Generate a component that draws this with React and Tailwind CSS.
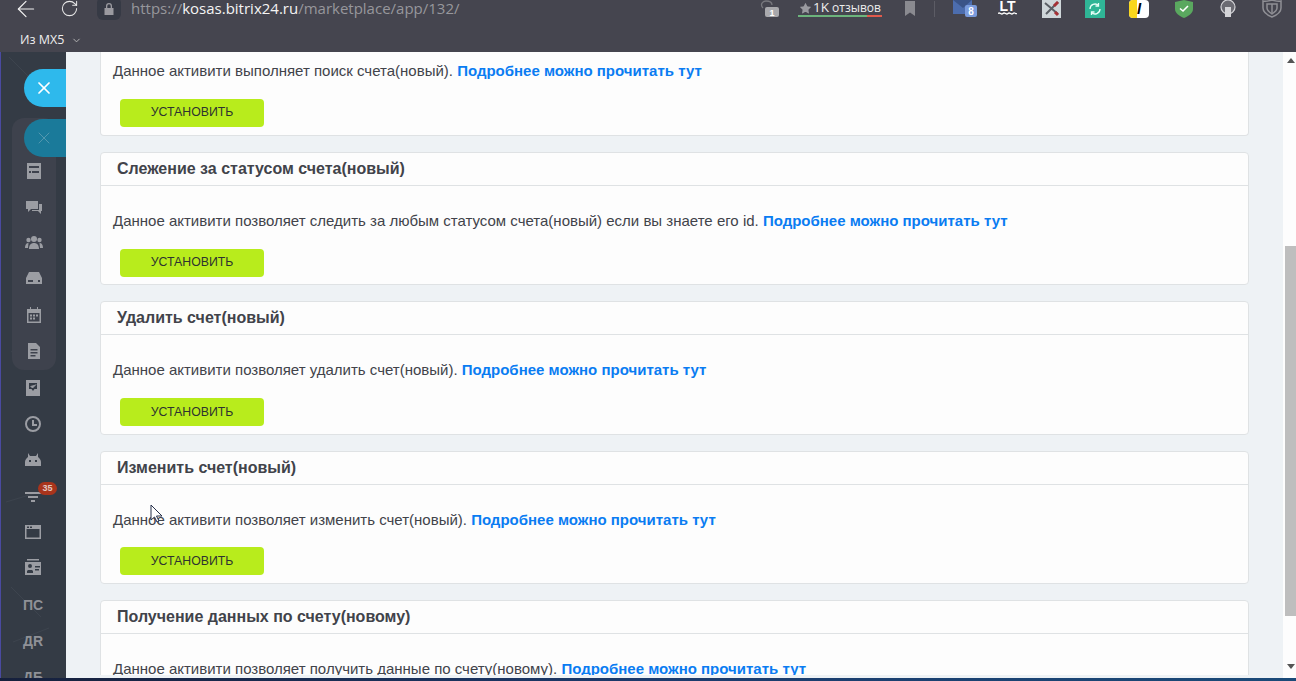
import React from "react";
import { ArrowLeft, RotateCw, ChevronDown, Star, X } from "lucide-react";

const Sans = "font-['Liberation_Sans',Arial,sans-serif]";

function Card({ title, text, noHeader }) {
  return (
    <section className={noHeader ? "shrink-0 h-[84px] bg-[#fdfdfd] border-x border-b border-[#dfe2e4] rounded-b" : "shrink-0 h-[133.33px] bg-[#fdfdfd] border border-[#dfe2e4] rounded"}>
      {title && (
        <h3 className="h-[33px] pl-4 flex items-center border-b border-[#dfe2e4] text-[16px] leading-none font-bold text-[#41434a]">{title}</h3>
      )}
      <div className={noHeader ? "pl-3 pt-[10px]" : "pl-3 pt-[26px]"}>
        <p className="text-[15px] leading-[18px] text-[#41434a] whitespace-nowrap">
          {text} <a className="font-bold text-[#0a7cf2]">Подробнее можно прочитать тут</a>
        </p>
        <button className="block ml-[7px] mt-[18.67px] w-[144px] h-[28px] rounded-sm bg-[#b8ec1c] text-[12.3px] text-[#2e3330]">УСТАНОВИТЬ</button>
      </div>
    </section>
  );
}

const S = "#9b9da3";
function Ic({ children }) {
  return <div className="h-9 flex items-center justify-center"><svg width="18" height="18" viewBox="0 0 18 18" fill={S}>{children}</svg></div>;
}

export default function App() {
  return (
    <div className={`${Sans} w-[1296px] h-[681px] overflow-hidden flex flex-col bg-[#2a3040]`}>
      <header className="h-[52px] shrink-0 bg-[#45454f] text-white">
        <div className="h-[17px] flex items-center">
          <ArrowLeft size={26} strokeWidth={1.1} className="shrink-0 ml-[13px] text-[#f2f2f2]" />
          <RotateCw size={19} strokeWidth={1.3} className="shrink-0 ml-[21px] text-[#e8e8e8]" />
          <div className="shrink-0 ml-[18px] w-[24px] h-[23px] rounded-md bg-[#363a45] flex items-center justify-center">
            <svg width="12" height="14" viewBox="0 0 12 14" fill="#9a9aa0"><path d="M3 6V4a3 3 0 0 1 6 0v2h1.500v7H1.500V6zM4.300 6h3.400V4a1.700 1.700 0 0 0-3.400 0z" /></svg>
          </div>
          <div className="shrink-0 ml-[10px] leading-[17px] font-['Open_Sans',sans-serif] text-[15px] text-[#97979c]">
            https://<span className="text-[#f4f4f4]">kosas.bitrix24.ru</span>/marketplace/app/132/
          </div>
          <div className="ml-auto flex items-center h-full">
            <svg width="19" height="18" viewBox="0 0 19 18" fill="none" className="shrink-0">
              <path d="M3 8C0 5 2 1 6 1s6 2 6 4" stroke="#77777d" strokeWidth="1.300" />
              <rect x="5" y="7" width="14" height="10" rx="2" fill="#a9a9ad" />
              <text x="12" y="15.500" textAnchor="middle" fontSize="9" fontWeight="bold" fill="#fff">1</text>
            </svg>
            <div className="shrink-0 ml-[19px] w-[84px] h-[17px] relative flex items-center justify-center font-['Open_Sans',sans-serif] text-[#eee] -mt-px">
              <Star size={13} fill="#9a9aa0" stroke="none" className="mr-[1px]" />
              <span className="text-[13.5px] leading-none">1K</span>
              <span className="text-[12px] leading-none ml-[3px]">отзывов</span>
              <div className="absolute left-0 right-0 bottom-0 h-[2px] flex">
                <div className="w-[69px] bg-[#6cb47c]" /><div className="flex-1 bg-[#e25a4c]" />
              </div>
            </div>
            <svg className="shrink-0 ml-[23px]" width="10" height="15" viewBox="0 0 10 15" fill="#8a8a90"><path d="M0 0h10v15L5 11.500 0 15z" /></svg>
            <div className="shrink-0 ml-[19px] w-px h-[16px] bg-[#5c5c65]" />
            <svg className="shrink-0 ml-[18px]" width="24" height="17" viewBox="0 0 24 17">
              <rect y="0" width="19" height="14" fill="#4c6dae" />
              <path d="M0 0h19L10 8z" fill="#3a5488" />
              <rect x="12" y="5" width="12" height="12" rx="2" fill="#7a9bdc" />
              <text x="18" y="15" textAnchor="middle" fontSize="10" fontWeight="bold" fill="#fff">8</text>
            </svg>
            <div className="shrink-0 ml-[21px] w-[19px] h-[17px] flex flex-col items-center">
              <span className="text-[14px] leading-[12px] font-bold text-white">LT</span>
              <svg width="19" height="4" viewBox="0 0 19 4" fill="none" stroke="#fff" strokeWidth="1.300"><path d="M0 1.500c2-2 3 2 5 0s3 2 5 0 3 2 5 0 2 1 4 0" /></svg>
            </div>
            <svg className="shrink-0 ml-[25px]" width="19" height="18" viewBox="0 0 19 18">
              <rect width="19" height="18" fill="#cfd6da" />
              <path d="M3 3l13 11M16 2L4 14" stroke="#5b5f66" strokeWidth="2" />
              <path d="M12 6l4-4M13 12l3 3" stroke="#a52f35" strokeWidth="3" />
            </svg>
            <div className="shrink-0 ml-[24px] w-[20px] h-[18px] bg-[#2fb596] flex items-center justify-center">
              <svg width="12" height="12" viewBox="0 0 12 12" fill="none" stroke="#e8fff8" strokeWidth="1.300"><path d="M1 6a5 5 0 0 1 8.500-3.500M11 6a5 5 0 0 1-8.500 3.500" /><path d="M9.500 0v3h-3M2.500 12V9h3" /></svg>
            </div>
            <div className="shrink-0 ml-[24px] w-[20px] h-[18px] rounded-sm bg-white relative overflow-hidden flex items-center justify-center">
              <div className="absolute left-0 top-0 w-[8px] h-[18px] bg-[#f9d71c]" />
              <span className="relative text-[15px] leading-none font-bold italic text-black">l</span>
            </div>
            <svg className="shrink-0 ml-[25px]" width="20" height="18" viewBox="0 0 20 18"><path d="M10 0l9 2v7c0 4-4 7-9 9-5-2-9-5-9-9V2z" fill="#5aa85f" /><path d="M6 8.500L9 11l5-5" stroke="#fff" strokeWidth="1.600" fill="none" /></svg>
            <svg className="shrink-0 ml-[25px]" width="18" height="18" viewBox="0 0 18 18" fill="none" stroke="#d4d4d8" strokeWidth="1.200"><circle cx="9" cy="7" r="7" fill="#6b6b73" /><rect x="6" y="7" width="6" height="10" fill="#d4d4d8" stroke="none" /></svg>
            <svg className="shrink-0 ml-[25px] mr-[14px]" width="20" height="18" viewBox="0 0 20 18" fill="none" stroke="#8f8f95" strokeWidth="1.500"><path d="M1 1c3 1 5 0 9-1 4 1 6 2 9 1v7c0 4-4 7-9 9-5-2-9-5-9-9z" /><path d="M5 4h10v4c0 2-2 4-5 6-3-2-5-4-5-6z" /><path d="M10 4v10" /></svg>
          </div>
        </div>
        <div className="h-[35px] pl-[20px] pt-[12px] flex items-center text-[12.5px] font-['Open_Sans',sans-serif] text-[#eee]">
          Из MX5 <ChevronDown size={11} className="ml-[7px] text-[#bbb]" />
        </div>
      </header>
      <div className="h-[626px] shrink-0 flex overflow-hidden">
        <nav className="w-[66px] shrink-0 border-l border-[#4a4aa0] bg-[#343b45] relative overflow-hidden">
          <svg className="absolute inset-0" width="66" height="626" fill="none" stroke="#3d444e" strokeWidth="1">
            <path d="M8 5l30 30M30 250l25-18M10 300c15-10 30-5 30 15M5 450l40-12M10 535l30 30M12 590l36-14" />
          </svg>
          <div className="h-[17px]" />
          <div className="relative ml-[23px] h-[38px] rounded-l-full bg-[#2eb9ec] flex items-center pl-[10px]"><X size={20} strokeWidth={2.1} className="text-white" /></div>
          <div className="ml-[11px] mr-[10px] mt-[11px] h-[252px] bg-[#3e424d] rounded-[12px] relative">
            <div className="h-[39px] pt-[1px]"><div className="ml-[12px] -mr-[10px] h-[38px] rounded-l-full bg-[#1a7a9a] flex items-center pl-[10px]"><X size={20} strokeWidth={1} className="text-[#5e9db3]" /></div></div>
            <div className="-ml-[1px] -mt-[4px]">
              <Ic><path d="M2 1h14v16H2zM4 6h10V4H4zM4 9h2v2H4zm3 0h7v2H7z" fillRule="evenodd" /></Ic>
              <Ic><path d="M1 3h12v8H6l-3 3v-3H1z" /><path d="M14 6h3v7h-1v3l-3-3H7v-1h7z" /></Ic>
              <Ic><circle cx="9" cy="5" r="3" /><circle cx="3.500" cy="6" r="2.200" /><circle cx="14.500" cy="6" r="2.200" /><path d="M4 15c0-4 2-6 5-6s5 2 5 6zM0 14c0-3 1-5 3.500-5L3 14zM18 14c0-3-1-5-3.500-5l.5 5z" /></Ic>
              <Ic><path d="M4 2h10l3 6v6H1V8zM3 10v2h5v-2zm10 0v2h2v-2z" fillRule="evenodd" /></Ic>
              <Ic><path d="M2 3h3V1h1v2h6V1h1v2h3v14H2zM3.500 7v8.500h11V7zM5 8.500h2v2H5zm3 0h2v2H8zm3 0h2v2h-2zm-6 3h2v2H5zm3 0h2v2H8z" fillRule="evenodd" /></Ic>
              <Ic><path d="M3 1h8l4 4v12H3zM5.500 7v1.500h7V7zm0 3v1.500h7V10zm0 3v1.500h5V13z" fillRule="evenodd" /></Ic>
            </div>
          </div>
          <div className="relative pr-[1px]">
            <Ic><path d="M2 1h14v16H2zM5 4v6h2.500l1.500 2 1.500-2H13V4z" fillRule="evenodd" /><path d="M6.500 7l2 2 3.500-3.500" stroke={S} strokeWidth="1" /></Ic>
            <Ic><path d="M9 1a8 8 0 1 1 0 16A8 8 0 0 1 9 1zm0 2a6 6 0 1 0 0 12A6 6 0 0 0 9 3zM8 5h2v4h3v2H8z" fillRule="evenodd" /></Ic>
            <Ic><path d="M4 2l2 3h6l2-3v4c1.500 1 3 3 3 5v4H1v-4c0-2 1.500-4 3-5zm1 7v2h2V9zm6 0v2h2V9z" fillRule="evenodd" /></Ic>
            <div className="relative">
              <Ic><path d="M1 5h16v2H1zm3 4h10v2H4zm3 4h4v2H7z" /></Ic>
              <div className="absolute left-[37px] top-[4px] w-[19px] h-[13px] rounded-full bg-[#a9341c] text-[9px] leading-[13px] font-bold text-center text-[#e2c8c0]">35</div>
            </div>
            <Ic><path d="M1 2h16v14H1zM2.500 6v8.500h13V6zM3 3.500V5h2V3.500zm3 0V5h2V3.500z" fillRule="evenodd" /></Ic>
            <Ic><path d="M3 0h12v1.500H3zM1 3h16v13H1zM4 7a2 2 0 1 0 4 0 2 2 0 0 0-4 0zM3 14h6v-2l-1-1H4l-1 1zm8-7v1.500h5V7zm0 3v1.500h4V10z" fillRule="evenodd" /></Ic>
            <div className="pt-[1px]">
              {["ПС", "ДR", "ДБ"].map((t) => (
                <div key={t} className="h-9 flex items-center justify-center text-[14px] font-bold text-[#8f9197]">{t}</div>
              ))}
            </div>
          </div>
        </nav>
        <main className="w-[1217px] shrink-0 bg-[#eef2f5] pl-[34px] pr-[34px] relative">
          <div className="h-[623px] flex flex-col gap-[16px] overflow-hidden">
            <Card noHeader text="Данное активити выполняет поиск счета(новый)." />
            <Card title="Слежение за статусом счета(новый)" text="Данное активити позволяет следить за любым статусом счета(новый) если вы знаете его id." />
            <Card title="Удалить счет(новый)" text="Данное активити позволяет удалить счет(новый)." />
            <Card title="Изменить счет(новый)" text="Данное активити позволяет изменить счет(новый)." />
            <Card title="Получение данных по счету(новому)" text="Данное активити позволяет получить данные по счету(новому)." />
          </div>
          <svg className="absolute left-[84px] top-[452px]" width="14" height="20" viewBox="0 0 14 20"><path d="M1 1v15l3.500-3 2.500 5 2-1-2.500-5H12z" fill="#fff" stroke="#26304a" strokeWidth="1" /></svg>
        </main>
        <aside className="w-[13px] shrink-0 bg-[#fdfdfd] pl-[2px] flex flex-col">
          <div className="h-[194px] pt-[6px] flex justify-center"><div className="w-0 h-0 border-x-[4px] border-x-transparent border-b-[5px] border-b-[#555]" /></div>
          <div className="h-[370px] bg-[#bebebe]" />
          <div className="mt-[48px] flex justify-center"><div className="w-0 h-0 border-x-[4px] border-x-transparent border-t-[5px] border-t-[#555]" /></div>
        </aside>
      </div>
      <div className="flex-1 bg-linear-to-r from-[#16203c] via-[#1b3a6c] to-[#1a4a78]" />
    </div>
  );
}
